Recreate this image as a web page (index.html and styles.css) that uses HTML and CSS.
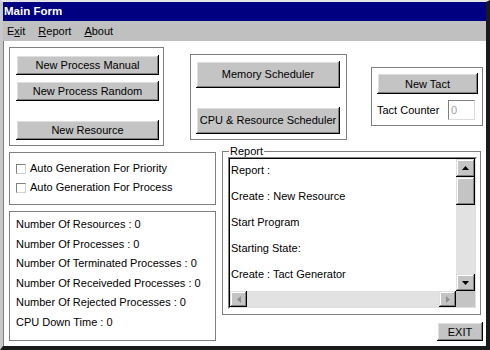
FILE: index.html
```html
<!DOCTYPE html>
<html lang="en">
<head>
    <meta charset="UTF-8">
    <meta name="viewport" content="width=device-width, initial-scale=1.0">
    <title>Main Form</title>
    <link rel="stylesheet" href="styles.css">
</head>
<body>
    <div class="window">
        <div class="titlebar">Main Form</div>

        <div class="menubar">
            <span class="menu-item">E<u>x</u>it</span>
            <span class="menu-item"><u>R</u>eport</span>
            <span class="menu-item"><u>A</u>bout</span>
        </div>

        <div class="client">
            <div class="top-row">
                <div class="panel panel-process">
                    <button class="btn">New Process Manual</button>
                    <button class="btn">New Process Random</button>
                    <button class="btn btn-resource">New Resource</button>
                </div>

                <div class="panel panel-sched">
                    <button class="btn">Memory Scheduler</button>
                    <button class="btn">CPU &amp; Resource Scheduler</button>
                </div>

                <div class="panel panel-tact">
                    <button class="btn">New Tact</button>
                    <div class="counter-row">
                        <span class="counter-label">Tact Counter</span>
                        <input class="counter-input" type="text" value="0" disabled>
                    </div>
                </div>
            </div>

            <div class="bottom-row">
                <div class="left-col">
                    <div class="panel panel-options">
                        <label class="check"><span class="check-box"></span>Auto Generation For Priority</label>
                        <label class="check"><span class="check-box"></span>Auto Generation For Process</label>
                    </div>

                    <div class="panel panel-stats">
                        <div>Number Of Resources : 0</div>
                        <div>Number Of Processes : 0</div>
                        <div>Number Of Terminated Processes : 0</div>
                        <div>Number Of Receiveded Processes : 0</div>
                        <div>Number Of Rejected Processes : 0</div>
                        <div>CPU Down Time : 0</div>
                    </div>
                </div>

                <div class="right-col">
                    <fieldset class="report">
                        <legend>Report</legend>
                        <div class="listbox">
                            <div class="listbox-inner">
                                <div class="list-items">
                                    <div class="list-item">Report :</div>
                                    <div class="list-item">Create : New Resource</div>
                                    <div class="list-item">Start Program</div>
                                    <div class="list-item">Starting State:</div>
                                    <div class="list-item">Create : Tact Generator</div>
                                </div>

                                <div class="vscroll">
                                    <div class="sb-btn sb-up">
                                        <svg width="7" height="4" viewBox="0 0 7 4"><polygon points="0,4 7,4 3.5,0" fill="#000"/></svg>
                                    </div>
                                    <div class="sb-btn sb-thumb"></div>
                                    <div class="sb-track"></div>
                                    <div class="sb-btn sb-down">
                                        <svg width="7" height="4" viewBox="0 0 7 4"><polygon points="0,0 7,0 3.5,4" fill="#000"/></svg>
                                    </div>
                                </div>

                                <div class="hscroll">
                                    <div class="sb-btn sb-side">
                                        <svg width="4" height="7" viewBox="0 0 4 7"><polygon points="4,0 4,7 0,3.5" fill="#909090"/></svg>
                                    </div>
                                    <div class="sb-track"></div>
                                    <div class="sb-btn sb-side">
                                        <svg width="4" height="7" viewBox="0 0 4 7"><polygon points="0,0 0,7 4,3.5" fill="#909090"/></svg>
                                    </div>
                                </div>

                                <div class="corner"></div>
                            </div>
                        </div>
                    </fieldset>

                    <button class="btn btn-exit">EXIT</button>
                </div>
            </div>
        </div>
    </div>
</body>
</html>
```

FILE: styles.css
```css
body {
    margin: 0;
    font-family: "Liberation Sans", Arial, sans-serif;
    font-size: 11px;
    color: #000;
}
.window {
    width: 490px;
    height: 350px;
    box-sizing: border-box;
    border-style: solid;
    border-width: 2px 4px 4px 3px;
    border-color: #e4e4e4 #1a1a1a #1a1a1a #c8c8c8;
    background: #fff;
    display: flex;
    flex-direction: column;
}
.titlebar {
    height: 19px;
    line-height: 19px;
    padding-left: 1px;
    background: #000080;
    color: #fff;
    font-weight: bold;
    font-size: 11.5px;
}
.menubar {
    height: 20px;
    line-height: 20px;
    background: #c0c0c0;
    display: flex;
    gap: 13px;
    padding-left: 4px;
}
.client {
    flex: 1;
    padding: 6px 0 0 5px;
    border-left: 1px solid #808080;
}
.top-row {
    display: flex;
    align-items: center;
    height: 99px;
}
.panel {
    box-sizing: border-box;
    border: 1px solid #808080;
    background: #fff;
}
.btn {
    display: block;
    padding: 0;
    border: none;
    background: #c4c4c4;
    font-family: inherit;
    font-size: 11px;
    color: #000;
    box-shadow: inset -1px -1px #000, inset 1px 1px #fff, inset -2px -2px #808080, inset 2px 2px #dfdfdf;
}
.panel-process {
    width: 155px;
    height: 99px;
    margin-right: 26px;
    padding: 7px 0 0 6px;
    display: flex;
    flex-direction: column;
    gap: 6px;
}
.panel-process .btn {
    width: 143px;
    height: 20px;
}
.panel-process .btn-resource {
    margin-top: 13px;
}
.panel-sched {
    width: 157px;
    height: 86px;
    margin-right: 24px;
    padding: 6px 0 0 5px;
    display: flex;
    flex-direction: column;
    gap: 19px;
}
.panel-sched .btn {
    width: 144px;
    height: 27px;
}
.panel-tact {
    width: 112px;
    height: 59px;
    padding: 5px 0 0 5px;
}
.panel-tact .btn {
    width: 101px;
    height: 21px;
}
.counter-row {
    display: flex;
    align-items: center;
    margin-top: 6px;
}
.counter-label {
    width: 71px;
}
.counter-input {
    width: 27px;
    height: 20px;
    box-sizing: border-box;
    padding: 0 2px;
    margin: 0;
    border: 1px solid;
    border-color: #808080 #dcdcdc #dcdcdc #808080;
    background: #fff;
    font-family: inherit;
    font-size: 11px;
    color: #a0a0a0;
}
.bottom-row {
    display: flex;
    gap: 6px;
}
.left-col {
    width: 207px;
    padding-top: 6px;
    display: flex;
    flex-direction: column;
    gap: 6px;
}
.panel-options {
    height: 53px;
    padding: 6px 0 0 6px;
    line-height: 19px;
}
.check {
    display: flex;
    align-items: center;
}
.check-box {
    width: 10px;
    height: 10px;
    box-sizing: border-box;
    margin-right: 4px;
    border: 1px solid;
    border-color: #808080 #d0d0d0 #d0d0d0 #808080;
}
.panel-stats {
    height: 130px;
    padding: 3px 0 0 6px;
    line-height: 19.6px;
}
.right-col {
    width: 261px;
    display: flex;
    flex-direction: column;
    align-items: flex-start;
}
.report {
    width: 259px;
    height: 169px;
    box-sizing: border-box;
    margin: 0;
    min-width: 0;
    padding: 0 3px 5px 5px;
    border: 1px solid #808080;
}
.report legend {
    padding: 0 1px;
    margin-left: 1px;
    line-height: 11px;
    font-size: 11px;
}
.listbox {
    width: 249px;
    height: 152px;
    box-sizing: border-box;
    border: 1px solid;
    border-color: #808080 #fff #fff #808080;
}
.listbox-inner {
    height: 100%;
    box-sizing: border-box;
    border: 1px solid;
    border-color: #000 #dfdfdf #dfdfdf #000;
    display: grid;
    grid-template-columns: 1fr 19px;
    grid-template-rows: 1fr 16px;
}
.list-items {
    overflow: hidden;
    padding-left: 1px;
}
.list-item {
    line-height: 26px;
}
.list-item:first-child {
    margin-top: -2px;
}
.vscroll {
    display: flex;
    flex-direction: column;
}
.hscroll {
    display: flex;
}
.sb-btn {
    background: #c4c4c4;
    box-shadow: inset -1px -1px #000, inset 1px 1px #dfdfdf, inset -2px -2px #808080, inset 2px 2px #fff;
    display: flex;
    align-items: center;
    justify-content: center;
}
.sb-up {
    height: 18px;
}
.sb-thumb {
    height: 28px;
}
.sb-down {
    height: 17px;
}
.sb-side {
    width: 17px;
}
.sb-track {
    flex: 1;
    background: #e2e2e2;
}
.corner {
    background: #c4c4c4;
}
.btn-exit {
    align-self: flex-end;
    width: 46px;
    height: 19px;
    margin-top: 7px;
}
```
